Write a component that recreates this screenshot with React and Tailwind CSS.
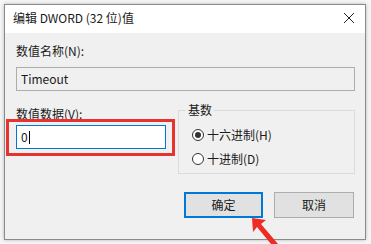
import React from "react";

const font = { fontFamily: '"Noto Sans CJK SC", "Noto Sans", sans-serif' };

const Radio = ({ checked, label }) => (
  <div className="flex items-center gap-[3px] h-[16px]">
    <span className="w-[12px] h-[12px] rounded-full border border-[#333] bg-white flex items-center justify-center">
      {checked && <span className="w-[6px] h-[6px] rounded-full bg-[#333]" />}
    </span>
    <span className="text-[12px] leading-[16px] text-[#1a1a1a]">{label}</span>
  </div>
);

const App = () => {
  return (
    <div
      className="relative w-[371px] h-[244px] bg-[#f7f7f7] pt-[4px] pl-[4px] overflow-hidden"
      style={font}
    >
      <div className="w-[362px] h-[236px] border border-[#8a8a8a] bg-[#f0f0f0] shadow-[0_0_4px_rgba(0,0,0,0.25)] flex flex-col">
        {/* title bar */}
        <div className="h-[28px] bg-white flex items-center justify-between pl-[8px] pr-[10px]">
          <span className="text-[12px] leading-[16px] text-[#1a1a1a] mt-[-2px]">
            编辑 DWORD (32 位)值
          </span>
          <svg width="12" height="12" viewBox="0 0 12 12" className="mt-[-2px]">
            <path d="M1 1L11 11M11 1L1 11" stroke="#222" strokeWidth="1" />
          </svg>
        </div>

        {/* body */}
        <div className="flex-1 pl-[11px] pr-[10px]">
          <div className="mt-[10px] text-[12px] leading-[16px] text-[#1a1a1a]">
            数值名称(N):
          </div>
          <div className="mt-[8px] h-[24px] w-[339px] border border-[#adadad] bg-[#f0f0f0] flex items-center pl-[4px] text-[12px] text-[#1a1a1a]">
            Timeout
          </div>

          <div className="flex mt-[15px]">
            <div className="w-[150px]">
              <div className="text-[12px] leading-[16px] text-[#1a1a1a]">
                数值数据(V):
              </div>
              <div className="mt-[3px] h-[24px] border border-[#0078d7] bg-white flex items-center pl-[4px] text-[12px] text-[#1a1a1a]">
                0<span className="w-px h-[13px] bg-black ml-[1px]" />
              </div>
            </div>
            <fieldset className="ml-[12px] mt-[-4px] w-[177px] h-[72px] border border-[#dcdcdc] pl-[13px]">
              <legend className="ml-[-6px] px-[2px] text-[12px] leading-[16px] text-[#1a1a1a]">
                基数
              </legend>
              <div className="mt-[9px] flex flex-col gap-[8px]">
                <Radio checked label="十六进制(H)" />
                <Radio label="十进制(D)" />
              </div>
            </fieldset>
          </div>

          <div className="flex justify-end gap-[11px] mt-[18px] pr-[1px]">
            <div className="w-[79px] h-[26px] border-2 border-[#0078d7] bg-[#e1e1e1] flex items-center justify-center text-[12px] text-[#1a1a1a]">
              确定
            </div>
            <div className="w-[80px] h-[26px] border border-[#adadad] bg-[#e1e1e1] flex items-center justify-center text-[12px] text-[#1a1a1a]">
              取消
            </div>
          </div>
        </div>
      </div>

      {/* red annotation box */}
      <div className="absolute left-[6px] top-[119px] w-[169px] h-[37px] border-[3px] border-[#e8322f]" />

      {/* red arrow */}
      <svg
        className="absolute left-[244px] top-[212px]"
        width="40"
        height="32"
        viewBox="0 0 40 32"
      >
        <polygon
          points="8,6 22,8 17,12 34,32 27,32 13,15 9,20"
          fill="#ee2b24"
        />
      </svg>
    </div>
  );
};

export default App;
